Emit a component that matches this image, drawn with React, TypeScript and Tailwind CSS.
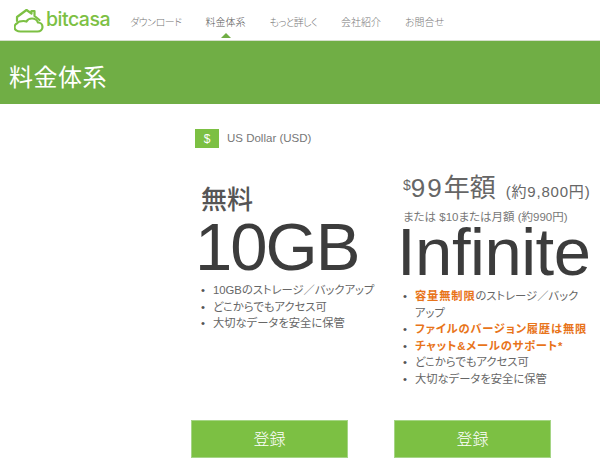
const font = { fontFamily: '"Liberation Sans", "Noto Sans CJK JP", sans-serif' };

const navLinks = [
  { name: "ダウンロード", tracking: "tracking-[-0.5px]" },
  { name: "料金体系", tracking: "" },
  { name: "もっと詳しく", tracking: "tracking-[-0.7px]" },
  { name: "会社紹介", tracking: "" },
  { name: "お問合せ", tracking: "" },
];

function Logo() {
  return (
    <div className="flex items-center">
      <svg width="30" height="25" viewBox="0 0 30 25" fill="none" stroke="#7cc043" strokeWidth="2.200" strokeLinejoin="round" strokeLinecap="round">
        <path d="M3 13V9L12.500 2l5 3.500V3h3v5l5 4" />
        <path d="M6.500 23.500h17c3 0 5-2 5-4.500s-2-4.500-4.500-4.500c-1-2.500-3.500-4-6-4-2.500 0-4.500 1-5.500 3-1-.5-2-.5-3-.5-3 0-5 .5-6 2-2 1-3 2.500-3 4 0 3 3 4.500 6 4.500z" />
      </svg>
      <span className="ml-[2px] text-[19.500px] leading-none font-['Inter'] font-medium tracking-[-0.5px] text-[#7cc043]">bitcasa</span>
    </div>
  );
}

function Bullet({ children }: { children: React.ReactNode }) {
  return (
    <li className="flex text-[11.300px] leading-[16.600px] whitespace-nowrap text-[#666] [font-feature-settings:'palt']">
      <span className="w-[12px] shrink-0 text-[#555]">•</span>
      <span>{children}</span>
    </li>
  );
}

function Orange({ children }: { children: React.ReactNode }) {
  return <span className="font-bold tracking-[0.8px] text-[#e8741a]">{children}</span>;
}

function SignupButton() {
  return (
    <button className="mt-auto flex h-[38px] w-[157px] items-center justify-center border border-[#a5d585] bg-[#7cc043] pt-[2px] text-[16px] font-light text-white">
      登録
    </button>
  );
}

export default function App() {
  return (
    <div className="h-[472px] w-[600px] overflow-hidden bg-white" style={font}>
      <header className="flex h-[41px] items-center border-b border-[#d5dfcc] pl-[14px]">
        <Logo />
        <nav className="ml-[20px] flex gap-[24px] pt-[4px] text-[10px] font-light text-[#777] [font-feature-settings:'palt']">
          {navLinks.map((link) => (
            <a key={link.name} className={link.name === "料金体系" ? "relative text-[#555]" : link.tracking}>
              {link.name}
              {link.name === "料金体系" && (
                <span className="absolute left-1/2 top-[18px] -ml-[5px] border-x-[5px] border-b-[5px] border-x-transparent border-b-[#70ae45]" />
              )}
            </a>
          ))}
        </nav>
      </header>

      <div className="flex h-[63px] items-center bg-[#70ae45] pt-[10px] pl-[9px]">
        <h1 className="text-[24px] tracking-[0.5px] text-white">料金体系</h1>
      </div>

      <main className="pl-[191px]">
        <div className="mt-[25px] flex items-center pl-[4px]">
          <span className="flex h-[19px] w-[24px] items-center justify-center bg-[#7cc043] text-[12px] text-white">$</span>
          <span className="ml-[8px] text-[11.500px] text-[#777]">US Dollar (USD)</span>
        </div>

        <div className="mt-[25px] flex">
          <section className="flex h-[285px] w-[203px] flex-col">
            <h2 className="mt-[13px] pl-[10px] text-[26px] leading-[28px] font-medium text-[#555]">無料</h2>
            <div className="pl-[4px] text-[67px] leading-[66px] tracking-[-2px] text-[#3c3c3c]">10GB</div>
            <ul className="mt-[2px] pl-[10px]">
              <Bullet>10GBのストレージ／バックアップ</Bullet>
              <Bullet>どこからでもアクセス可</Bullet>
              <Bullet>大切なデータを安全に保管</Bullet>
            </ul>
            <SignupButton />
          </section>

          <section className="flex h-[285px] w-[206px] flex-col">
            <div className="pl-[9px] text-[26px] leading-[30px] whitespace-nowrap text-[#666]">
              <sup className="text-[14px]">$</sup>
              <span className="tracking-[2px]">99</span>年額
              <span className="ml-[10px] text-[15px] tracking-[0.8px]">(約9,800円)</span>
            </div>
            <div className="mt-[2px] pl-[9px] text-[11.500px] leading-[16px] text-[#777] [font-feature-settings:'palt']">または $10または月額 (約990円)</div>
            <div className="-mt-[3px] pl-[3px] text-[67px] leading-[60px] tracking-[-0.5px] text-[#3c3c3c]">Infinite</div>
            <ul className="mt-[6px] pl-[9px]">
              <Bullet><Orange>容量無制限</Orange>のストレージ／バック<br />アップ</Bullet>
              <Bullet><Orange>ファイルのバージョン履歴は無限</Orange></Bullet>
              <Bullet><Orange>チャット&amp;メールのサポート*</Orange></Bullet>
              <Bullet>どこからでもアクセス可</Bullet>
              <Bullet>大切なデータを安全に保管</Bullet>
            </ul>
            <SignupButton />
          </section>
        </div>
      </main>
    </div>
  );
}
